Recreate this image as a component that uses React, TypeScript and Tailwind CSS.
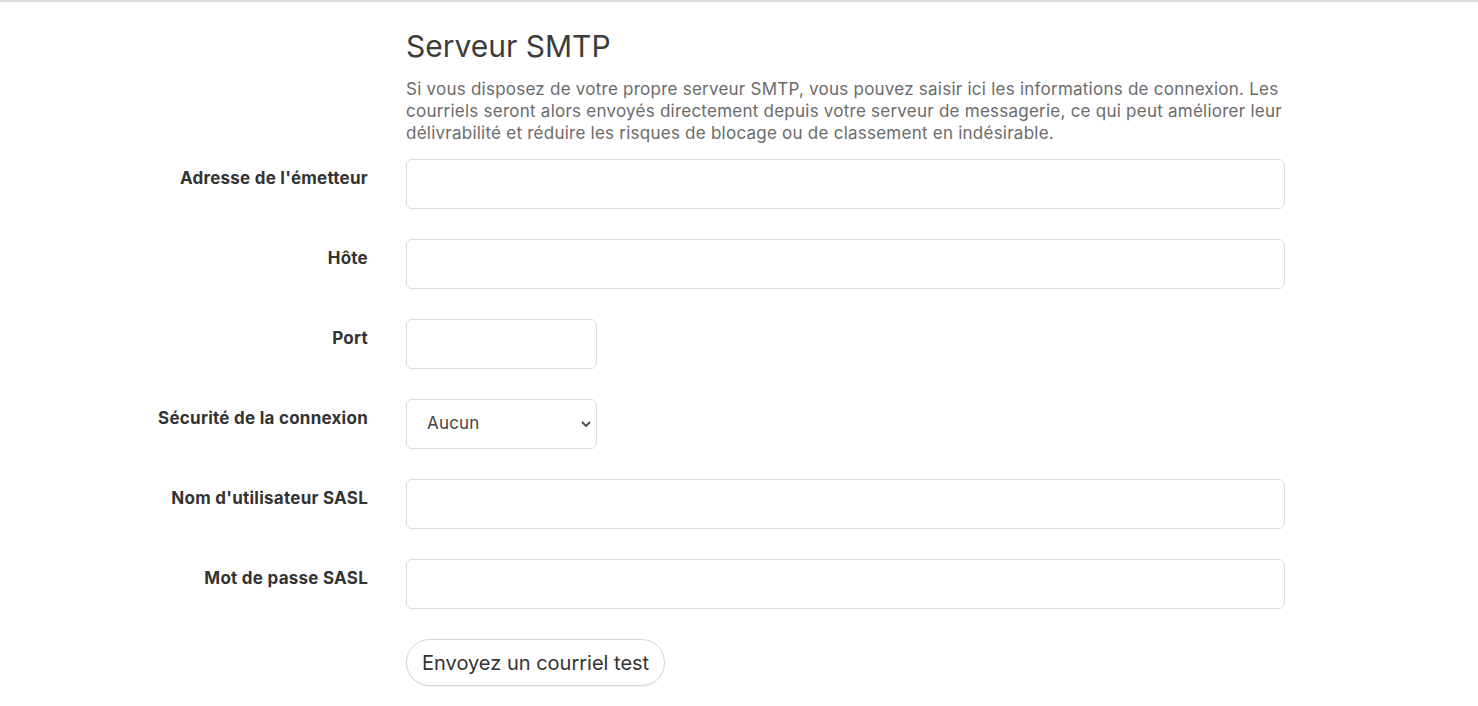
const fields = [
    { label: "Adresse de l'émetteur", kind: 'text' },
    { label: 'Hôte', kind: 'text' },
    { label: 'Port', kind: 'port' },
    { label: 'Sécurité de la connexion', kind: 'select' },
    { label: "Nom d'utilisateur SASL", kind: 'text' },
    { label: 'Mot de passe SASL', kind: 'password' },
];

export default function App() {
    return (
        <div className="min-h-screen border-t-2 border-[#dcdcdc] bg-white font-['Inter',sans-serif] text-[#333]">
            <div className="flex pt-[26px]">
                <div className="w-[406px] shrink-0" />
                <div className="w-[879px]">
                    <h2 className="text-[30px] leading-[36px] font-normal text-[#3c3c3c]">
                        Serveur SMTP
                    </h2>
                    <p className="mt-[14px] text-[17px] leading-[22px] tracking-[0.24px] text-[#6b6b6b]">
                        Si vous disposez de votre propre serveur SMTP, vous pouvez saisir ici les
                        informations de connexion. Les courriels seront alors envoyés directement
                        depuis votre serveur de messagerie, ce qui peut améliorer leur délivrabilité
                        et réduire les risques de blocage ou de classement en indésirable.
                    </p>
                </div>
            </div>

            <div className="mt-[15px] flex flex-col gap-[30px]">
                {fields.map((f) => (
                    <div key={f.label} className="flex">
                        <label className="w-[368px] shrink-0 pt-[7px] text-right text-[17px] leading-[24px] font-bold tracking-[0.25px] text-[#333]">
                            {f.label}
                        </label>
                        <div className="ml-[38px] w-[879px]">
                            {f.kind === 'select' ? (
                                <div className="relative w-[191px]">
                                    <select className="h-[50px] w-full appearance-none rounded-[6px] border border-[#dcdcdc] bg-white pl-[20px] text-[17px] tracking-[0.2px] text-[#444] outline-none">
                                        <option>Aucun</option>
                                    </select>
                                    <svg
                                        className="pointer-events-none absolute top-[20px] right-[5px]"
                                        width="12"
                                        height="10"
                                        viewBox="0 0 12 10"
                                        fill="none"
                                        stroke="#444"
                                        strokeWidth="1.8"
                                    >
                                        <path d="M2 3l4 4 4-4" />
                                    </svg>
                                </div>
                            ) : (
                                <input
                                    type={f.kind === 'password' ? 'password' : 'text'}
                                    className={
                                        f.kind === 'port'
                                            ? 'h-[50px] w-[191px] rounded-[6px] border border-[#dcdcdc] bg-white px-3 outline-none'
                                            : 'h-[50px] w-full rounded-[6px] border border-[#dcdcdc] bg-white px-3 outline-none'
                                    }
                                />
                            )}
                        </div>
                    </div>
                ))}
            </div>

            <div className="mt-[30px] flex">
                <div className="w-[406px] shrink-0" />
                <button className="h-[47px] rounded-full border border-[#d4d4d4] bg-white px-[15px] text-[20px] text-[#333] shadow-[0_1px_1px_rgba(0,0,0,0.06)]">
                    Envoyez un courriel test
                </button>
            </div>
        </div>
    );
}
